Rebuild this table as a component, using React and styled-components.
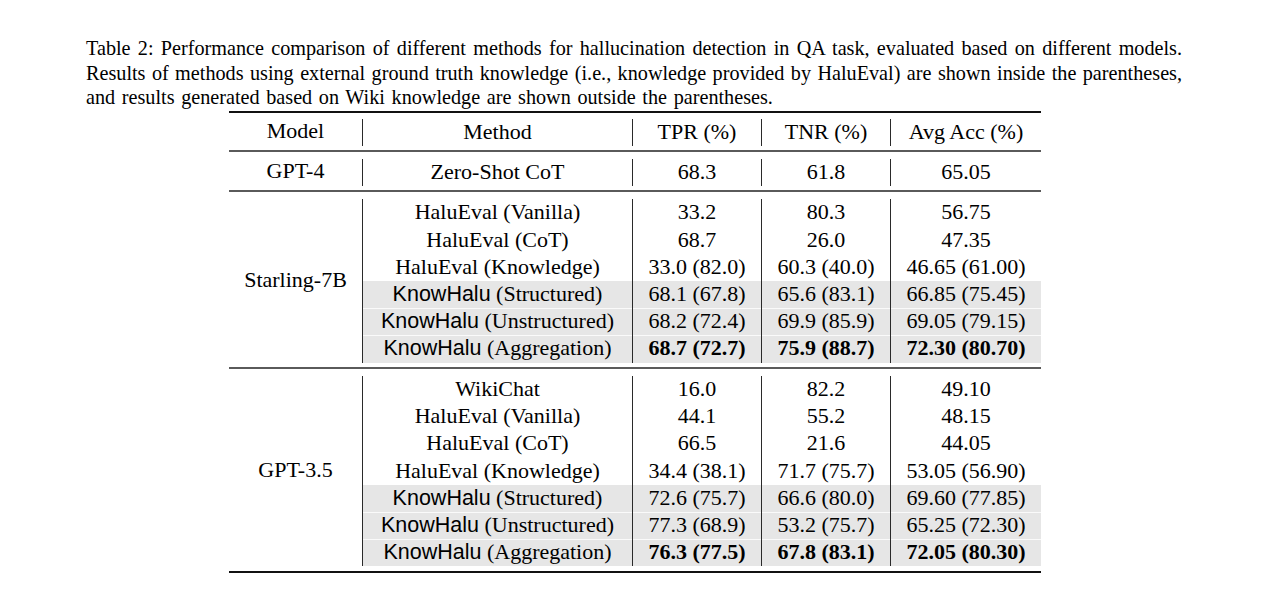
import React from "react";
import styled, { createGlobalStyle } from "styled-components";

const GlobalStyle = createGlobalStyle`
  html, body {
    margin: 0;
    padding: 0;
    background: #fff;
  }
  body {
    font-family: "Liberation Serif", "Times New Roman", serif;
    color: #000;
  }
`;

const groups = [
  {
    model: "Starling-7B",
    rows: [
      { m: "HaluEval", v: "(Vanilla)", d: ["33.2", "80.3", "56.75"] },
      { m: "HaluEval", v: "(CoT)", d: ["68.7", "26.0", "47.35"] },
      { m: "HaluEval", v: "(Knowledge)", d: ["33.0 (82.0)", "60.3 (40.0)", "46.65 (61.00)"] },
      { m: "KnowHalu", v: "(Structured)", d: ["68.1 (67.8)", "65.6 (83.1)", "66.85 (75.45)"], shade: true },
      { m: "KnowHalu", v: "(Unstructured)", d: ["68.2 (72.4)", "69.9 (85.9)", "69.05 (79.15)"], shade: true, gap: true },
      { m: "KnowHalu", v: "(Aggregation)", d: ["68.7 (72.7)", "75.9 (88.7)", "72.30 (80.70)"], shade: true, gap: true, bold: true },
    ],
  },
  {
    model: "GPT-3.5",
    rows: [
      { m: "WikiChat", v: "", d: ["16.0", "82.2", "49.10"] },
      { m: "HaluEval", v: "(Vanilla)", d: ["44.1", "55.2", "48.15"] },
      { m: "HaluEval", v: "(CoT)", d: ["66.5", "21.6", "44.05"] },
      { m: "HaluEval", v: "(Knowledge)", d: ["34.4 (38.1)", "71.7 (75.7)", "53.05 (56.90)"] },
      { m: "KnowHalu", v: "(Structured)", d: ["72.6 (75.7)", "66.6 (80.0)", "69.60 (77.85)"], shade: true },
      { m: "KnowHalu", v: "(Unstructured)", d: ["77.3 (68.9)", "53.2 (75.7)", "65.25 (72.30)"], shade: true, gap: true },
      { m: "KnowHalu", v: "(Aggregation)", d: ["76.3 (77.5)", "67.8 (83.1)", "72.05 (80.30)"], shade: true, gap: true, bold: true },
    ],
  },
];

const App = () => {
  return (
    <Page>
      <GlobalStyle />
      <Caption>
        <CaptionLine $justify>
          Table 2: Performance comparison of different methods for hallucination detection in QA task, evaluated based on different models.
        </CaptionLine>
        <CaptionLine $justify>
          Results of methods using external ground truth knowledge (i.e., knowledge provided by HaluEval) are shown inside the parentheses,
        </CaptionLine>
        <CaptionLine>
          and results generated based on Wiki knowledge are shown outside the parentheses.
        </CaptionLine>
      </Caption>

      <Table>
        {/* header */}
        <Section $first>
          <ModelCell>Model</ModelCell>
          <Rows>
            <Row>
              <Cell>Method</Cell>
              <Cell>TPR (%)</Cell>
              <Cell>TNR (%)</Cell>
              <Cell>Avg Acc (%)</Cell>
            </Row>
          </Rows>
        </Section>

        <Section>
          <ModelCell>GPT-4</ModelCell>
          <Rows>
            <Row>
              <Cell>Zero-Shot CoT</Cell>
              <Cell>68.3</Cell>
              <Cell>61.8</Cell>
              <Cell>65.05</Cell>
            </Row>
          </Rows>
        </Section>

        {groups.map((g, gi) => (
          <Section key={g.model} $last={gi === groups.length - 1}>
            <ModelCell>{g.model}</ModelCell>
            <Rows>
              {g.rows.map((r, i) => (
                <Row key={i} $shade={r.shade} $gap={r.gap}>
                  <Cell>
                    {r.m === "KnowHalu" ? <Sans>KnowHalu</Sans> : r.m}
                    {r.v ? " " + r.v : ""}
                  </Cell>
                  {r.d.map((x, j) => (
                    <Cell key={j} $bold={r.bold}>{x}</Cell>
                  ))}
                </Row>
              ))}
            </Rows>
          </Section>
        ))}
      </Table>
    </Page>
  );
};

const Page = styled.div`
  width: 1286px;
  height: 607px;
  overflow: hidden;
  padding-top: 36px;
  box-sizing: border-box;
`;

const Caption = styled.div`
  margin-left: 86px;
  width: 1096px;
  font-size: 20.2px;
  line-height: 24.5px;
`;

const CaptionLine = styled.div`
  white-space: nowrap;
  text-align: ${(p) => (p.$justify ? "justify" : "left")};
  text-align-last: ${(p) => (p.$justify ? "justify" : "left")};
  word-spacing: ${(p) => (p.$justify ? "0" : "1.6px")};
`;

const Table = styled.div`
  margin-left: 229px;
  margin-top: 1px;
  width: 812px;
  border-top: 2px solid #111;
  border-bottom: 2px solid #111;
  font-size: 22px;
`;

const Section = styled.div`
  display: flex;
  padding: ${(p) => (p.$first ? "6px 0 4px" : "7px 0 4.5px")};
  border-bottom: ${(p) => (p.$last ? "none" : "2px solid #5a5a5a")};
`;

const ModelCell = styled.div`
  width: 133px;
  flex: none;
  display: flex;
  align-items: center;
  justify-content: center;
  line-height: 20px;
  padding-bottom: 2px;
`;

const Rows = styled.div`
  flex: 1;
  display: flex;
  flex-direction: column;
`;

const Row = styled.div`
  display: grid;
  grid-template-columns: 270px 129px 129px 151px;
  height: 27.2px;
  background: ${(p) =>
    p.$shade
      ? p.$gap
        ? "linear-gradient(#fafafa 0 1px, #e6e6e6 1px)"
        : "#e6e6e6"
      : "transparent"};
`;

const Cell = styled.div`
  border-left: 1px solid #2a2a2a;
  text-align: center;
  white-space: nowrap;
  line-height: 25px;
  font-weight: ${(p) => (p.$bold ? 700 : 400)};
`;

const Sans = styled.span`
  font-family: "Liberation Sans", Arial, sans-serif;
  font-size: 21.5px;
`;

export default App;
